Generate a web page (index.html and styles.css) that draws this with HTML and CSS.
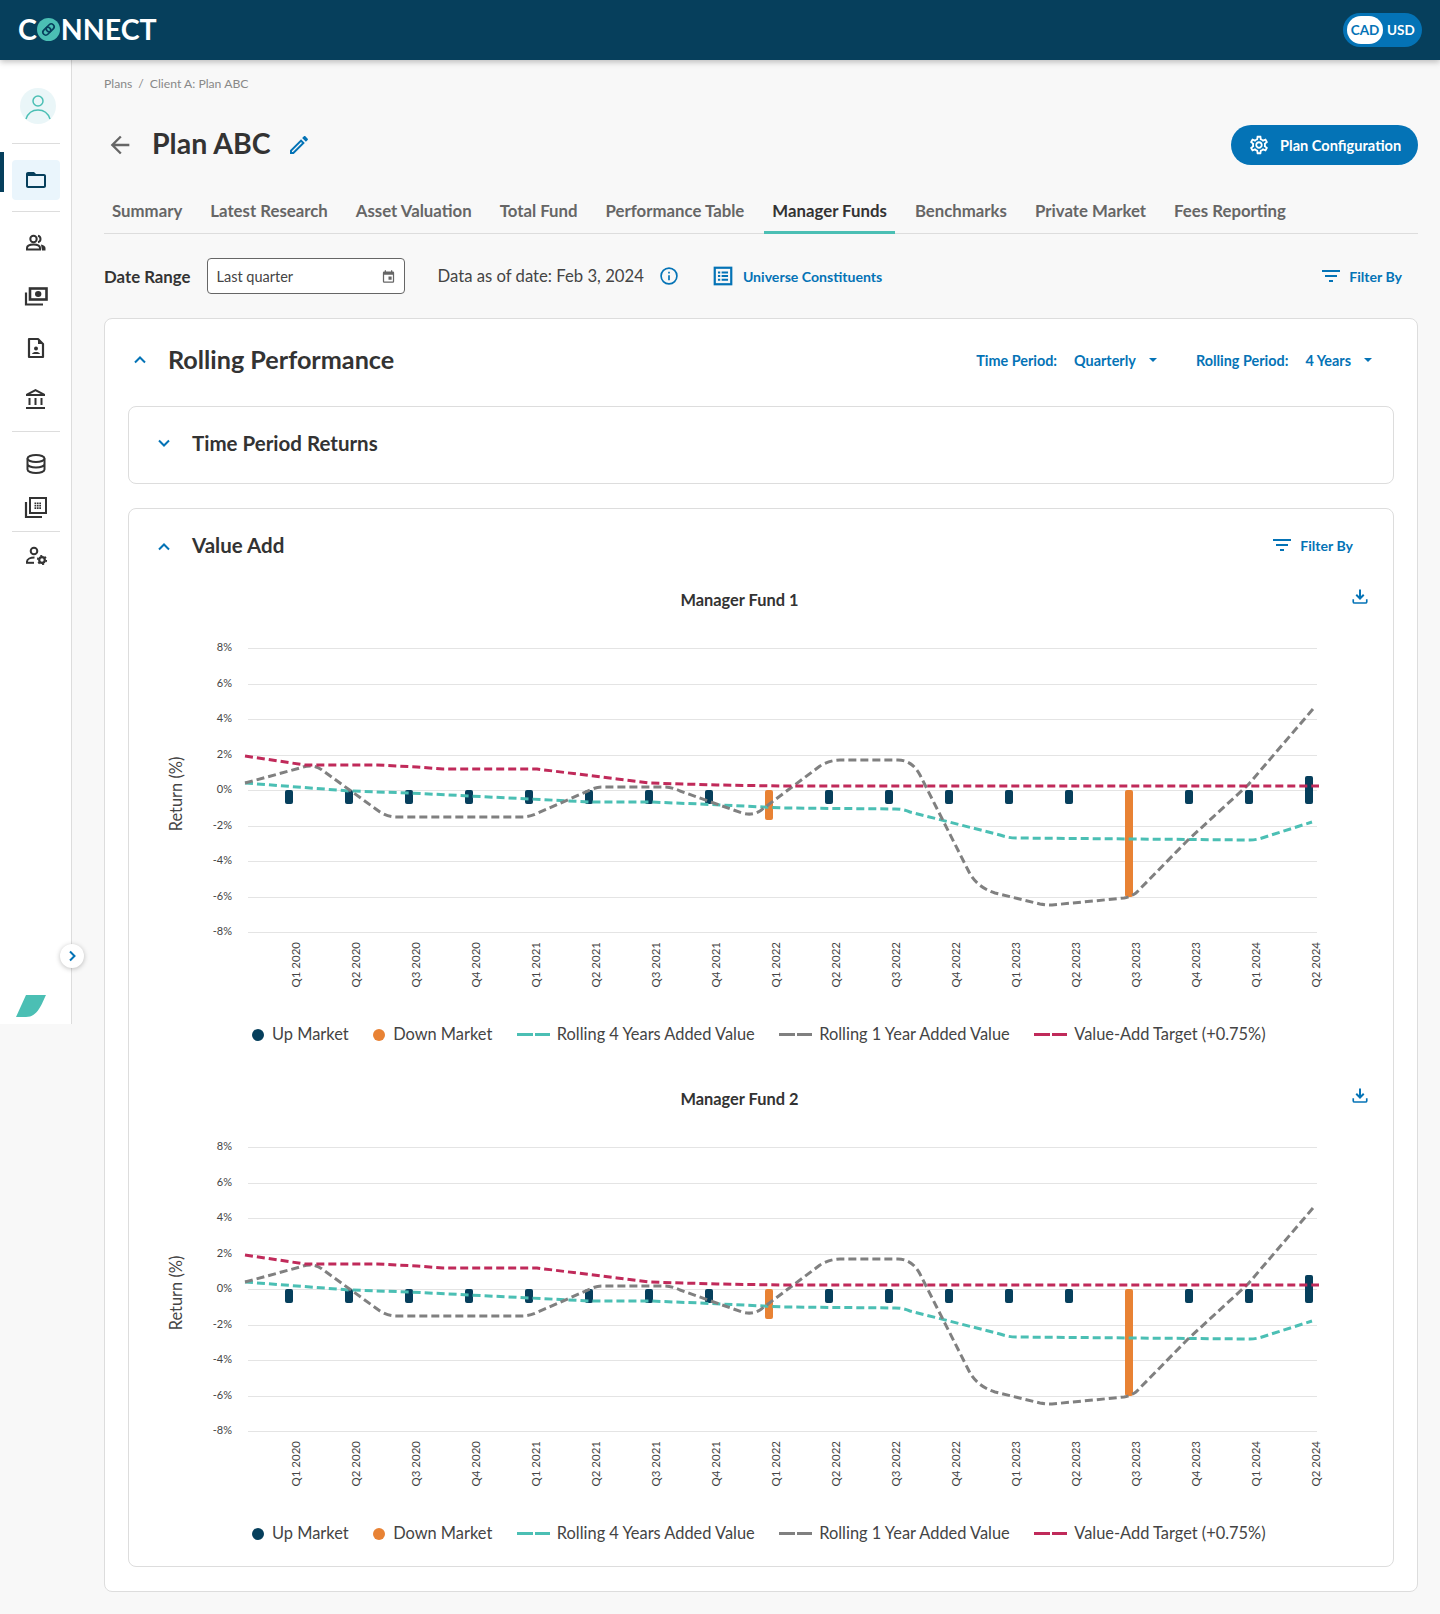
FILE: index.html
```html
<!DOCTYPE html>
<html lang="en">
<head>
<meta charset="utf-8">
<title>Plan ABC</title>
<link rel="stylesheet" href="styles.css">
</head>
<body>
<header class="topbar">
  <div class="logo"><span>C</span><svg class="logo-o" viewBox="0 0 24 24"><circle cx="12" cy="12" r="12" fill="#4bbfb4"/><g fill="none" stroke="#063f5c" stroke-width="1.700"><rect x="5" y="9" width="9" height="6" rx="3" transform="rotate(-45 12 12)"/><rect x="10" y="9" width="9" height="6" rx="3" transform="rotate(-45 12 12)"/></g></svg><span>NNECT</span></div>
  <div class="currency"><span class="cur-on">CAD</span><span class="cur-off">USD</span></div>
</header>
<div class="layout">
  <nav class="sidebar">
    <div class="avatar"><svg viewBox="0 0 36 36" class="avatar-icon"><circle cx="18" cy="13" r="5" fill="none" stroke="#4bbfb4" stroke-width="1.500"/><path d="M6 31c2-6 7-9 12-9s10 3 12 9" fill="none" stroke="#4bbfb4" stroke-width="1.500"/></svg></div>
    <div class="rule r-top"></div>
    <div class="nav-active"><svg viewBox="0 0 24 24" class="nav-svg navy"><path d="M20 6h-8l-2-2H4c-1.100 0-1.990.9-1.990 2L2 18c0 1.100.9 2 2 2h16c1.100 0 2-.9 2-2V8c0-1.100-.9-2-2-2zm0 12H4V8h16v10z"/></svg></div>
    <div class="rule r-mid"></div>
    <div class="nav-item n-people"><svg viewBox="0 0 24 24" class="nav-svg"><circle cx="9.500" cy="8" r="3.200" fill="none" stroke="#333" stroke-width="2"/><path d="M3 18.500V17c0-2.400 3.300-3.500 6.500-3.500S16 14.600 16 17v1.500z" fill="none" stroke="#333" stroke-width="2"/><path d="M14 4.800a3.300 3.300 0 0 1 0 6.400" fill="none" stroke="#333" stroke-width="2"/><path d="M17 13.500c2.300.4 4.500 1.500 4.500 3.500v2.500H18z" fill="#333"/></svg></div>
    <div class="nav-item n-money"><svg viewBox="0 0 24 24" class="nav-svg"><rect x="6" y="4.500" width="16.500" height="11" fill="none" stroke="#333" stroke-width="2.600"/><ellipse cx="14.200" cy="10" rx="3.200" ry="3" fill="#333"/><path d="M2 8.500V20.500h17" fill="none" stroke="#333" stroke-width="2.200"/></svg></div>
    <div class="nav-item n-doc"><svg viewBox="0 0 24 24" class="nav-svg"><path d="M5 3h9l5 5v13H5z" fill="none" stroke="#333" stroke-width="2.200" stroke-linejoin="round"/><path d="M14 3l5 5h-5z" fill="#333"/><circle cx="12" cy="12.500" r="2" fill="#333"/><path d="M8 18c.5-1.500 2-2 4-2s3.500.5 4 2z" fill="#333"/></svg></div>
    <div class="nav-item n-bank"><svg viewBox="0 0 24 24" class="nav-svg"><path d="M6.500 10h-2v7h2v-7zm6 0h-2v7h2v-7zm8.500 9H2v2h19v-2zm-2.500-9h-2v7h2v-7zM11.500 1L2 6v2h19V6l-9.500-5zM6.260 6l5.240-2.730L16.740 6H6.260z"/></svg></div>
    <div class="rule r-low"></div>
    <div class="nav-item n-db"><svg viewBox="0 0 24 24" class="nav-svg"><ellipse cx="12" cy="6.500" rx="8.500" ry="3.500" fill="none" stroke="#333" stroke-width="2"/><path d="M3.500 6.500v11c0 2 3.800 3.500 8.500 3.500s8.500-1.500 8.500-3.500v-11M3.500 12c0 2 3.800 3.500 8.500 3.500s8.500-1.500 8.500-3.500" fill="none" stroke="#333" stroke-width="2"/></svg></div>
    <div class="nav-item n-news"><svg viewBox="0 0 24 24" class="nav-svg"><rect x="6" y="3" width="16" height="15" fill="none" stroke="#333" stroke-width="2"/><path d="M2 7v15h16" fill="none" stroke="#333" stroke-width="2.200"/><path d="M10.500 7.500h1.700v1.700h-1.700zm2.400 0h1.700v1.700h-1.700zm2.400 0H17v1.700h-1.700zm-4.800 2.400h1.700v1.700h-1.700zm2.400 0h1.700v1.700h-1.700zm2.400 0H17v1.700h-1.700zm-4.800 2.400h1.700V14h-1.700zm2.400 0h1.700V14h-1.700zm2.400 0H17V14h-1.700z" fill="#333"/></svg></div>
    <div class="rule r-last"></div>
    <div class="nav-item n-admin"><svg viewBox="0 0 24 24" class="nav-svg"><circle cx="10" cy="7" r="3.300" fill="none" stroke="#333" stroke-width="2"/><path d="M3 19v-1.500c0-2.500 3.500-4 7.500-4" fill="none" stroke="#333" stroke-width="2"/><path d="M2 18.800h8" stroke="#333" stroke-width="2"/><circle cx="18" cy="16" r="2.800" fill="none" stroke="#333" stroke-width="2.200"/><circle cx="18" cy="16" r="4.300" fill="none" stroke="#333" stroke-width="1.600" stroke-dasharray="2 2.500"/></svg></div>
    <div class="side-foot"><svg viewBox="0 0 30 22" class="leaf"><path d="M10 0H30C26 8 22 22 10 22H0z" fill="#4bbfb4"/></svg></div>
    <button class="collapse" type="button"><svg viewBox="0 0 12 12" class="collapse-icon"><path d="M4 1.500 8.500 6 4 10.500" fill="none" stroke="#0473b6" stroke-width="2"/></svg></button>
  </nav>
  <main class="content">
    <div class="crumbs"><span>Plans</span><span class="slash">/</span><span>Client A: Plan ABC</span></div>
    <div class="title-row">
      <svg viewBox="0 0 24 24" class="back"><path d="M20 11H7.830l5.590-5.590L12 4l-8 8 8 8 1.410-1.410L7.830 13H20v-2z"/></svg>
      <h1 class="title">Plan ABC</h1>
      <svg viewBox="0 0 24 24" class="pencil"><path d="M3 17.250V21h3.750L17.810 9.940l-3.750-3.750L3 17.250zM5.920 19H5v-.92l9.060-9.060.92.92L5.920 19zM20.710 5.630l-2.340-2.340c-.2-.2-.45-.29-.71-.29s-.51.1-.7.29l-1.830 1.830 3.750 3.750 1.830-1.830c.39-.39.39-1.020 0-1.410z"/></svg>
      <button class="config" type="button"><svg viewBox="0 0 24 24" class="gear"><path d="M19.430 12.980c.04-.32.07-.64.07-.98 0-.34-.03-.66-.07-.98l2.110-1.650c.19-.15.24-.42.12-.64l-2-3.460c-.09-.16-.26-.25-.44-.25-.06 0-.12.01-.17.03l-2.490 1c-.52-.4-1.080-.73-1.690-.98l-.38-2.650C14.460 2.180 14.250 2 14 2h-4c-.25 0-.46.18-.49.42l-.38 2.650c-.61.25-1.170.59-1.690.98l-2.490-1c-.06-.02-.12-.03-.18-.03-.17 0-.34.09-.43.25l-2 3.460c-.13.22-.07.49.12.64l2.110 1.650c-.04.32-.07.65-.07.98 0 .33.03.66.07.98l-2.110 1.650c-.19.15-.24.42-.12.64l2 3.460c.09.16.26.25.44.25.06 0 .12-.01.17-.03l2.490-1c.52.4 1.080.73 1.690.98l.38 2.650c.03.24.24.42.49.42h4c.25 0 .46-.18.49-.42l.38-2.650c.61-.25 1.170-.59 1.690-.98l2.490 1c.06.02.12.03.18.03.17 0 .34-.09.43-.25l2-3.460c.12-.22.07-.49-.12-.64l-2.110-1.650zm-1.980-1.710c.04.31.05.52.05.73 0 .21-.02.43-.05.73l-.14 1.130.89.7 1.080.84-.7 1.210-1.270-.51-1.040-.42-.9.68c-.43.32-.84.56-1.250.73l-1.060.43-.16 1.130-.2 1.350h-1.400l-.19-1.350-.16-1.130-1.060-.43c-.43-.18-.83-.41-1.230-.71l-.91-.7-1.060.43-1.270.51-.7-1.210 1.080-.84.89-.7-.14-1.130c-.03-.31-.05-.54-.05-.74s.02-.43.05-.73l.14-1.130-.89-.7-1.080-.84.7-1.210 1.270.51 1.040.42.9-.68c.43-.32.84-.56 1.250-.73l1.060-.43.16-1.130.2-1.350h1.390l.19 1.350.16 1.130 1.060.43c.43.18.83.41 1.230.71l.91.7 1.060-.43 1.270-.51.7 1.210-1.070.85-.89.7.14 1.130zM12 8c-2.210 0-4 1.790-4 4s1.790 4 4 4 4-1.790 4-4-1.790-4-4-4zm0 6c-1.100 0-2-.9-2-2s.9-2 2-2 2 .9 2 2-.9 2-2 2z"/></svg>Plan Configuration</button>
    </div>
    <div class="tabs">
      <a class="tab">Summary</a><a class="tab">Latest Research</a><a class="tab">Asset Valuation</a><a class="tab">Total Fund</a><a class="tab">Performance Table</a><a class="tab tab-on">Manager Funds</a><a class="tab">Benchmarks</a><a class="tab">Private Market</a><a class="tab">Fees Reporting</a>
    </div>
    <div class="filters">
      <strong class="range-label">Date Range</strong>
      <div class="date-input"><span>Last quarter</span><svg viewBox="0 0 24 24" class="cal"><path d="M19 4h-1V2h-2v2H8V2H6v2H5a2 2 0 0 0-2 2v14a2 2 0 0 0 2 2h14a2 2 0 0 0 2-2V6a2 2 0 0 0-2-2zm0 16H5V9h14zM12 12h5v5h-5z" fill="#666"/></svg></div>
      <span class="asof">Data as of date: Feb 3, 2024</span>
      <svg viewBox="0 0 24 24" class="info"><circle cx="12" cy="12" r="9.500" fill="none" stroke="#0473b6" stroke-width="2"/><path d="M11 11h2v6h-2zm0-4h2v2h-2z" fill="#0473b6"/></svg>
      <svg viewBox="0 0 24 24" class="universe"><rect x="3" y="3" width="18" height="18" fill="none" stroke="#0473b6" stroke-width="2.400"/><path d="M6.500 7h2.500v2.200H6.500zm4 0h7v2.200h-7zM6.500 11h2.500v2.200H6.500zm4 0h7v2.200h-7zM6.500 15h2.500v2.200H6.500zm4 0h7v2.200h-7z" fill="#0473b6"/></svg>
      <a class="link universe-link">Universe Constituents</a>
      <div class="filter-by top-filter"><svg viewBox="0 0 18 12" class="filter-icon"><path d="M0 0h18v2H0zM3 5h12v2H3zM7 10h4v2H7z" fill="#0473b6"/></svg><span class="link">Filter By</span></div>
    </div>
    <section class="card">
      <div class="card-head">
        <svg viewBox="0 0 12 8" class="chev"><path d="M1 6.500 6 1.500l5 5" fill="none" stroke="#0473b6" stroke-width="2"/></svg>
        <h2 class="h-main">Rolling Performance</h2>
        <div class="selects">
          <span class="link sel-link">Time Period:</span><span class="link sel-link sel-val">Quarterly</span><i class="caret"></i>
          <span class="link sel-link sel-next">Rolling Period:</span><span class="link sel-link sel-val">4 Years</span><i class="caret"></i>
        </div>
      </div>
      <section class="sub sub-closed">
        <div class="sub-head">
          <svg viewBox="0 0 12 8" class="chev"><path d="M1 1.500l5 5 5-5" fill="none" stroke="#0473b6" stroke-width="2"/></svg>
          <h3 class="h-sub">Time Period Returns</h3>
        </div>
      </section>
      <section class="sub sub-open">
        <div class="sub-head">
          <svg viewBox="0 0 12 8" class="chev chev-low"><path d="M1 6.500 6 1.500l5 5" fill="none" stroke="#0473b6" stroke-width="2"/></svg>
          <h3 class="h-sub">Value Add</h3>
          <div class="filter-by sub-filter"><svg viewBox="0 0 18 12" class="filter-icon"><path d="M0 0h18v2H0zM3 5h12v2H3zM7 10h4v2H7z" fill="#0473b6"/></svg><span class="link">Filter By</span></div>
        </div>

        <div class="chart">
          <div class="chart-head"><h4 class="chart-title">Manager Fund 1</h4><svg viewBox="0 0 24 24" class="dl"><path d="M12 2v11M7 9l5 5 5-5" fill="none" stroke="#0473b6" stroke-width="2.600"/><path d="M3 15v3.500c0 1 1 1.500 2 1.500h14c1 0 2-.5 2-1.500V15" fill="none" stroke="#0473b6" stroke-width="2.200"/></svg></div>
          <svg class="plot" viewBox="129 615 1264 400">
            <g class="grid"><path d="M248 648.500H1317M248 684.500H1317M248 719.500H1317M248 755.500H1317M248 790.500H1317M248 826.500H1317M248 861.500H1317M248 897.500H1317M248 932.500H1317"/></g>
            <g class="ylab"><text x="232" y="651">8%</text><text x="232" y="687">6%</text><text x="232" y="722">4%</text><text x="232" y="758">2%</text><text x="232" y="793">0%</text><text x="232" y="829">-2%</text><text x="232" y="864">-4%</text><text x="232" y="900">-6%</text><text x="232" y="935">-8%</text></g>
            <text class="ytitle" transform="translate(182 794) rotate(-90)">Return (%)</text>
            <g class="up"><rect x="285" y="790" width="8" height="14" rx="2"/><rect x="345" y="790" width="8" height="14" rx="2"/><rect x="405" y="790" width="8" height="14" rx="2"/><rect x="465" y="790" width="8" height="14" rx="2"/><rect x="525" y="790" width="8" height="14" rx="2"/><rect x="585" y="790" width="8" height="14" rx="2"/><rect x="645" y="790" width="8" height="14" rx="2"/><rect x="705" y="790" width="8" height="14" rx="2"/><rect x="825" y="790" width="8" height="14" rx="2"/><rect x="885" y="790" width="8" height="14" rx="2"/><rect x="945" y="790" width="8" height="14" rx="2"/><rect x="1005" y="790" width="8" height="14" rx="2"/><rect x="1065" y="790" width="8" height="14" rx="2"/><rect x="1185" y="790" width="8" height="14" rx="2"/><rect x="1245" y="790" width="8" height="14" rx="2"/><rect x="1305" y="776" width="8" height="28" rx="2"/></g>
            <g class="down"><rect x="765" y="790" width="8" height="30" rx="2"/><rect x="1125" y="790" width="8" height="107" rx="2"/></g>
            <path class="l-teal" d="M245 783L350 791L410 793L470 796L530 799L590 802L650 802L700 804L763 807L783 808L895 809Q903 809 910 812L1000 835Q1008 838 1016 838L1133 839L1250 840Q1256 840 1262 838L1312 822"/>
            <path class="l-gray" d="M245 783L300 768Q313 763 322 770L380 812Q388 817 396 817L522 817Q530 817 538 813L590 790Q596 787 602 787L664 787Q672 787 680 791L742 813Q752 816 760 811L820 766Q830 760 840 760L898 760Q912 760 920 775L968 870Q976 887 995 893L1040 904Q1046 905 1052 905L1124 898Q1130 897 1136 893L1188 840L1248 785L1313 709"/>
            <path class="l-red" d="M245 756L305 765L377 765L417 767L443 769L537 769L617 779L650 783L683 784L717 785L783 786L1319 786"/>
            <g class="xlab"><text transform="translate(300 942) rotate(-90)">Q1 2020</text><text transform="translate(360 942) rotate(-90)">Q2 2020</text><text transform="translate(420 942) rotate(-90)">Q3 2020</text><text transform="translate(480 942) rotate(-90)">Q4 2020</text><text transform="translate(540 942) rotate(-90)">Q1 2021</text><text transform="translate(600 942) rotate(-90)">Q2 2021</text><text transform="translate(660 942) rotate(-90)">Q3 2021</text><text transform="translate(720 942) rotate(-90)">Q4 2021</text><text transform="translate(780 942) rotate(-90)">Q1 2022</text><text transform="translate(840 942) rotate(-90)">Q2 2022</text><text transform="translate(900 942) rotate(-90)">Q3 2022</text><text transform="translate(960 942) rotate(-90)">Q4 2022</text><text transform="translate(1020 942) rotate(-90)">Q1 2023</text><text transform="translate(1080 942) rotate(-90)">Q2 2023</text><text transform="translate(1140 942) rotate(-90)">Q3 2023</text><text transform="translate(1200 942) rotate(-90)">Q4 2023</text><text transform="translate(1260 942) rotate(-90)">Q1 2024</text><text transform="translate(1320 942) rotate(-90)">Q2 2024</text></g>
          </svg>
          <div class="legend">
            <span class="lg"><i class="dot d-navy"></i>Up Market</span>
            <span class="lg"><i class="dot d-orange"></i>Down Market</span>
            <span class="lg"><i class="dash d-teal"></i>Rolling 4 Years Added Value</span>
            <span class="lg"><i class="dash d-gray"></i>Rolling 1 Year Added Value</span>
            <span class="lg"><i class="dash d-red"></i>Value-Add Target (+0.75%)</span>
          </div>
        </div>

        <div class="chart chart-second">
          <div class="chart-head"><h4 class="chart-title">Manager Fund 2</h4><svg viewBox="0 0 24 24" class="dl"><path d="M12 2v11M7 9l5 5 5-5" fill="none" stroke="#0473b6" stroke-width="2.600"/><path d="M3 15v3.500c0 1 1 1.500 2 1.500h14c1 0 2-.5 2-1.500V15" fill="none" stroke="#0473b6" stroke-width="2.200"/></svg></div>
          <svg class="plot" viewBox="129 615 1264 400">
            <g class="grid"><path d="M248 648.500H1317M248 684.500H1317M248 719.500H1317M248 755.500H1317M248 790.500H1317M248 826.500H1317M248 861.500H1317M248 897.500H1317M248 932.500H1317"/></g>
            <g class="ylab"><text x="232" y="651">8%</text><text x="232" y="687">6%</text><text x="232" y="722">4%</text><text x="232" y="758">2%</text><text x="232" y="793">0%</text><text x="232" y="829">-2%</text><text x="232" y="864">-4%</text><text x="232" y="900">-6%</text><text x="232" y="935">-8%</text></g>
            <text class="ytitle" transform="translate(182 794) rotate(-90)">Return (%)</text>
            <g class="up"><rect x="285" y="790" width="8" height="14" rx="2"/><rect x="345" y="790" width="8" height="14" rx="2"/><rect x="405" y="790" width="8" height="14" rx="2"/><rect x="465" y="790" width="8" height="14" rx="2"/><rect x="525" y="790" width="8" height="14" rx="2"/><rect x="585" y="790" width="8" height="14" rx="2"/><rect x="645" y="790" width="8" height="14" rx="2"/><rect x="705" y="790" width="8" height="14" rx="2"/><rect x="825" y="790" width="8" height="14" rx="2"/><rect x="885" y="790" width="8" height="14" rx="2"/><rect x="945" y="790" width="8" height="14" rx="2"/><rect x="1005" y="790" width="8" height="14" rx="2"/><rect x="1065" y="790" width="8" height="14" rx="2"/><rect x="1185" y="790" width="8" height="14" rx="2"/><rect x="1245" y="790" width="8" height="14" rx="2"/><rect x="1305" y="776" width="8" height="28" rx="2"/></g>
            <g class="down"><rect x="765" y="790" width="8" height="30" rx="2"/><rect x="1125" y="790" width="8" height="107" rx="2"/></g>
            <path class="l-teal" d="M245 783L350 791L410 793L470 796L530 799L590 802L650 802L700 804L763 807L783 808L895 809Q903 809 910 812L1000 835Q1008 838 1016 838L1133 839L1250 840Q1256 840 1262 838L1312 822"/>
            <path class="l-gray" d="M245 783L300 768Q313 763 322 770L380 812Q388 817 396 817L522 817Q530 817 538 813L590 790Q596 787 602 787L664 787Q672 787 680 791L742 813Q752 816 760 811L820 766Q830 760 840 760L898 760Q912 760 920 775L968 870Q976 887 995 893L1040 904Q1046 905 1052 905L1124 898Q1130 897 1136 893L1188 840L1248 785L1313 709"/>
            <path class="l-red" d="M245 756L305 765L377 765L417 767L443 769L537 769L617 779L650 783L683 784L717 785L783 786L1319 786"/>
            <g class="xlab"><text transform="translate(300 942) rotate(-90)">Q1 2020</text><text transform="translate(360 942) rotate(-90)">Q2 2020</text><text transform="translate(420 942) rotate(-90)">Q3 2020</text><text transform="translate(480 942) rotate(-90)">Q4 2020</text><text transform="translate(540 942) rotate(-90)">Q1 2021</text><text transform="translate(600 942) rotate(-90)">Q2 2021</text><text transform="translate(660 942) rotate(-90)">Q3 2021</text><text transform="translate(720 942) rotate(-90)">Q4 2021</text><text transform="translate(780 942) rotate(-90)">Q1 2022</text><text transform="translate(840 942) rotate(-90)">Q2 2022</text><text transform="translate(900 942) rotate(-90)">Q3 2022</text><text transform="translate(960 942) rotate(-90)">Q4 2022</text><text transform="translate(1020 942) rotate(-90)">Q1 2023</text><text transform="translate(1080 942) rotate(-90)">Q2 2023</text><text transform="translate(1140 942) rotate(-90)">Q3 2023</text><text transform="translate(1200 942) rotate(-90)">Q4 2023</text><text transform="translate(1260 942) rotate(-90)">Q1 2024</text><text transform="translate(1320 942) rotate(-90)">Q2 2024</text></g>
          </svg>
          <div class="legend">
            <span class="lg"><i class="dot d-navy"></i>Up Market</span>
            <span class="lg"><i class="dot d-orange"></i>Down Market</span>
            <span class="lg"><i class="dash d-teal"></i>Rolling 4 Years Added Value</span>
            <span class="lg"><i class="dash d-gray"></i>Rolling 1 Year Added Value</span>
            <span class="lg"><i class="dash d-red"></i>Value-Add Target (+0.75%)</span>
          </div>
        </div>
      </section>
    </section>
  </main>
</div>
</body>
</html>
```
FILE: styles.css
```css
* { box-sizing: border-box; }
html, body { margin: 0; padding: 0; }
body { background: #f8f8f8; color: #333; font-family: "Lato", "Liberation Sans", sans-serif; font-size: 16px; width: 1440px; }
h1, h2, h3, h4 { margin: 0; }

.topbar { height: 60px; background: #063f5c; display: flex; align-items: center; justify-content: space-between; padding: 0 18px; box-shadow: 0 2px 6px rgba(0,0,0,.25); position: relative; z-index: 2; }
.logo { display: flex; align-items: center; color: #fff; font-size: 28.5px; font-weight: 700; line-height: 1; margin-top: -2px; }
.logo-o { width: 23px; height: 23px; margin: 0 1px 0 0; }
.currency { display: flex; align-items: center; width: 79px; height: 34px; background: #0473b6; border-radius: 17px; padding: 0 4px; font-size: 13.5px; font-weight: 700; margin-top: -1px; }
.cur-on { width: 36px; height: 28px; background: #fff; color: #0473b6; border-radius: 14px; display: flex; align-items: center; justify-content: center; }
.cur-off { color: #fff; margin-left: 4px; }

.layout { display: flex; align-items: flex-start; }
.sidebar { position: relative; width: 72px; height: 964px; background: #fff; border-right: 1px solid #ddd; flex: none; display: flex; flex-direction: column; align-items: center; }
.avatar { width: 36px; height: 36px; border-radius: 50%; background: #eaf6f8; margin-top: 28px; margin-left: 4px; }
.avatar-icon { display: block; width: 36px; height: 36px; }
.rule { width: 48px; height: 1px; background: #ddd; }
.r-top { margin-top: 19px; }
.nav-active { width: 48px; height: 40px; margin-top: 16px; background: #eaf5fc; border-radius: 4px; display: flex; align-items: center; justify-content: center; position: relative; }
.nav-active::before { content: ""; position: absolute; left: -12px; top: -8px; width: 4px; height: 40px; background: #063f5c; }
.r-mid { margin-top: 11px; }
.nav-item { width: 48px; height: 24px; display: flex; align-items: center; justify-content: center; }
.nav-svg { width: 24px; height: 24px; fill: #333; }
.navy { fill: #063f5c; }
.n-people { margin-top: 19px; }
.n-money { margin-top: 29px; }
.n-doc { margin-top: 28px; }
.n-bank { margin-top: 28px; }
.r-low { margin-top: 19px; }
.n-db { margin-top: 20px; }
.n-news { margin-top: 19px; }
.r-last { margin-top: 12px; }
.n-admin { margin-top: 12px; }
.side-foot { margin-top: auto; align-self: flex-start; margin-left: 16px; margin-bottom: 7px; }
.leaf { display: block; width: 30px; height: 22px; }
.collapse { position: absolute; right: -13px; top: 884px; width: 24px; height: 24px; border-radius: 50%; border: 0; padding: 0; background: #fff; box-shadow: 0 1px 5px rgba(0,0,0,.25); display: flex; align-items: center; justify-content: center; }
.collapse-icon { width: 12px; height: 12px; }

.content { flex: 1; min-width: 0; padding: 16px 22px 22px 32px; }
.crumbs { display: flex; gap: 6px; font-size: 12.2px; line-height: 16px; color: #888; }
.title-row { display: flex; align-items: center; height: 40px; margin-top: 33px; }
.back { width: 28px; height: 28px; fill: #666; margin-left: 2px; }
.title { font-size: 28.5px; font-weight: 700; color: #333; margin-left: 18px; margin-bottom: 4px; line-height: 36px; }
.pencil { width: 24px; height: 24px; fill: #0473b6; margin-left: 16px; }
.config { margin-left: auto; width: 187px; height: 40px; border: 0; border-radius: 20px; background: #0473b6; color: #fff; font: 700 14.6px "Lato", sans-serif; display: flex; align-items: center; gap: 10px; padding: 0 0 0 17px; }
.gear { width: 22px; height: 22px; fill: #fff; }

.tabs { display: flex; gap: 12px; margin-top: 24px; border-bottom: 1px solid #ddd; height: 45px; }
.tab { padding: 0 8px; height: 45px; line-height: 44px; font-size: 16.8px; font-weight: 700; color: #666; }
.tab-on { color: #333; border-bottom: 3px solid #4bbfb4; }

.filters { display: flex; align-items: center; height: 36px; margin-top: 24px; }
.range-label { font-size: 16.8px; font-weight: 700; color: #333; }
.date-input { width: 198px; height: 36px; margin-left: 17px; background: #fff; border: 1px solid #666; border-radius: 4px; display: flex; align-items: center; justify-content: space-between; padding: 0 8px; font-size: 14.5px; color: #444; }
.cal { width: 15px; height: 15px; }
.asof { margin-left: 32px; font-size: 16.7px; color: #444; }
.info { width: 20px; height: 20px; margin-left: 15px; }
.universe { width: 22px; height: 22px; margin-left: 33px; }
.link { color: #0473b6; font-size: 14.1px; font-weight: 700; white-space: nowrap; }
.sel-link { font-size: 14.4px; }
.universe-link { margin-left: 9px; }
.filter-by { margin-left: auto; display: flex; align-items: center; gap: 9px; }
.filter-icon { width: 18px; height: 12px; display: block; }
.top-filter { margin-right: 16px; }
.sub-filter { margin-right: 40px; }

.card { margin-top: 24px; background: #fff; border: 1px solid #ddd; border-radius: 8px; padding: 0 23px 24px; }
.card-head { height: 87px; padding-bottom: 6px; display: flex; align-items: center; }
.chev { width: 12px; height: 8px; flex: none; margin-left: 6px; }
.chev-low { margin-top: 3px; }
.h-main { font-size: 25.2px; font-weight: 700; margin-left: 22px; margin-bottom: 1px; color: #333; }
.selects { margin-left: auto; display: flex; align-items: center; margin-right: 22px; margin-top: 1px; }
.sel-val { margin-left: 17px; }
.caret { width: 0; height: 0; border-left: 4px solid transparent; border-right: 4px solid transparent; border-top: 4px solid #0473b6; margin-left: 13px; }
.sel-next { margin-left: 39px; }

.sub { background: #fff; border: 1px solid #ddd; border-radius: 8px; }
.sub-closed { height: 78px; }
.sub-closed .sub-head { height: 76px; padding-bottom: 4px; }
.sub-open { margin-top: 24px; padding-bottom: 17px; }
.sub-head { height: 72px; display: flex; align-items: center; padding-left: 23px; }
.h-sub { font-size: 20.5px; font-weight: 700; margin-left: 22px; color: #333; }
.chart-head { position: relative; height: 34px; padding-top: 2px; display: flex; align-items: center; justify-content: center; }
.chart-title { font-size: 16.4px; font-weight: 700; color: #333; margin-right: 43px; }
.dl { position: absolute; right: 24px; top: 7px; width: 18px; height: 18px; }
.chart-second { margin-top: 30px; }
.plot { display: block; width: 1264px; height: 400px; }
.grid path { stroke: #e4e4e4; stroke-width: 1; fill: none; }
.ylab text { font-size: 11px; fill: #444; text-anchor: end; }
.xlab text { font-size: 11.5px; fill: #444; text-anchor: end; }
.ytitle { font-size: 16.4px; fill: #444; text-anchor: middle; }
.up rect { fill: #063f5c; }
.down rect { fill: #e88234; }
.l-teal, .l-gray, .l-red { fill: none; stroke-width: 3; stroke-dasharray: 8 4; stroke-linejoin: round; }
.l-teal { stroke: #4bbfb4; }
.l-gray { stroke: #808080; }
.l-red { stroke: #c02a5a; }
.legend { display: flex; align-items: center; height: 35px; padding-top: 2px; padding-left: 123px; font-size: 16.4px; color: #444; gap: 24.5px; }
.lg { display: flex; align-items: center; white-space: nowrap; }
.dot { width: 12px; height: 12px; border-radius: 50%; margin-right: 8px; margin-top: 2px; }
.d-navy { background: #063f5c; }
.d-orange { background: #e88234; }
.dash { width: 33px; height: 3px; margin-right: 7px; margin-top: 2px; }
.d-teal { background: linear-gradient(90deg, #4bbfb4 47%, transparent 47% 55%, #4bbfb4 55%); }
.d-gray { background: linear-gradient(90deg, #808080 47%, transparent 47% 55%, #808080 55%); }
.d-red { background: linear-gradient(90deg, #c02a5a 47%, transparent 47% 55%, #c02a5a 55%); }
```
